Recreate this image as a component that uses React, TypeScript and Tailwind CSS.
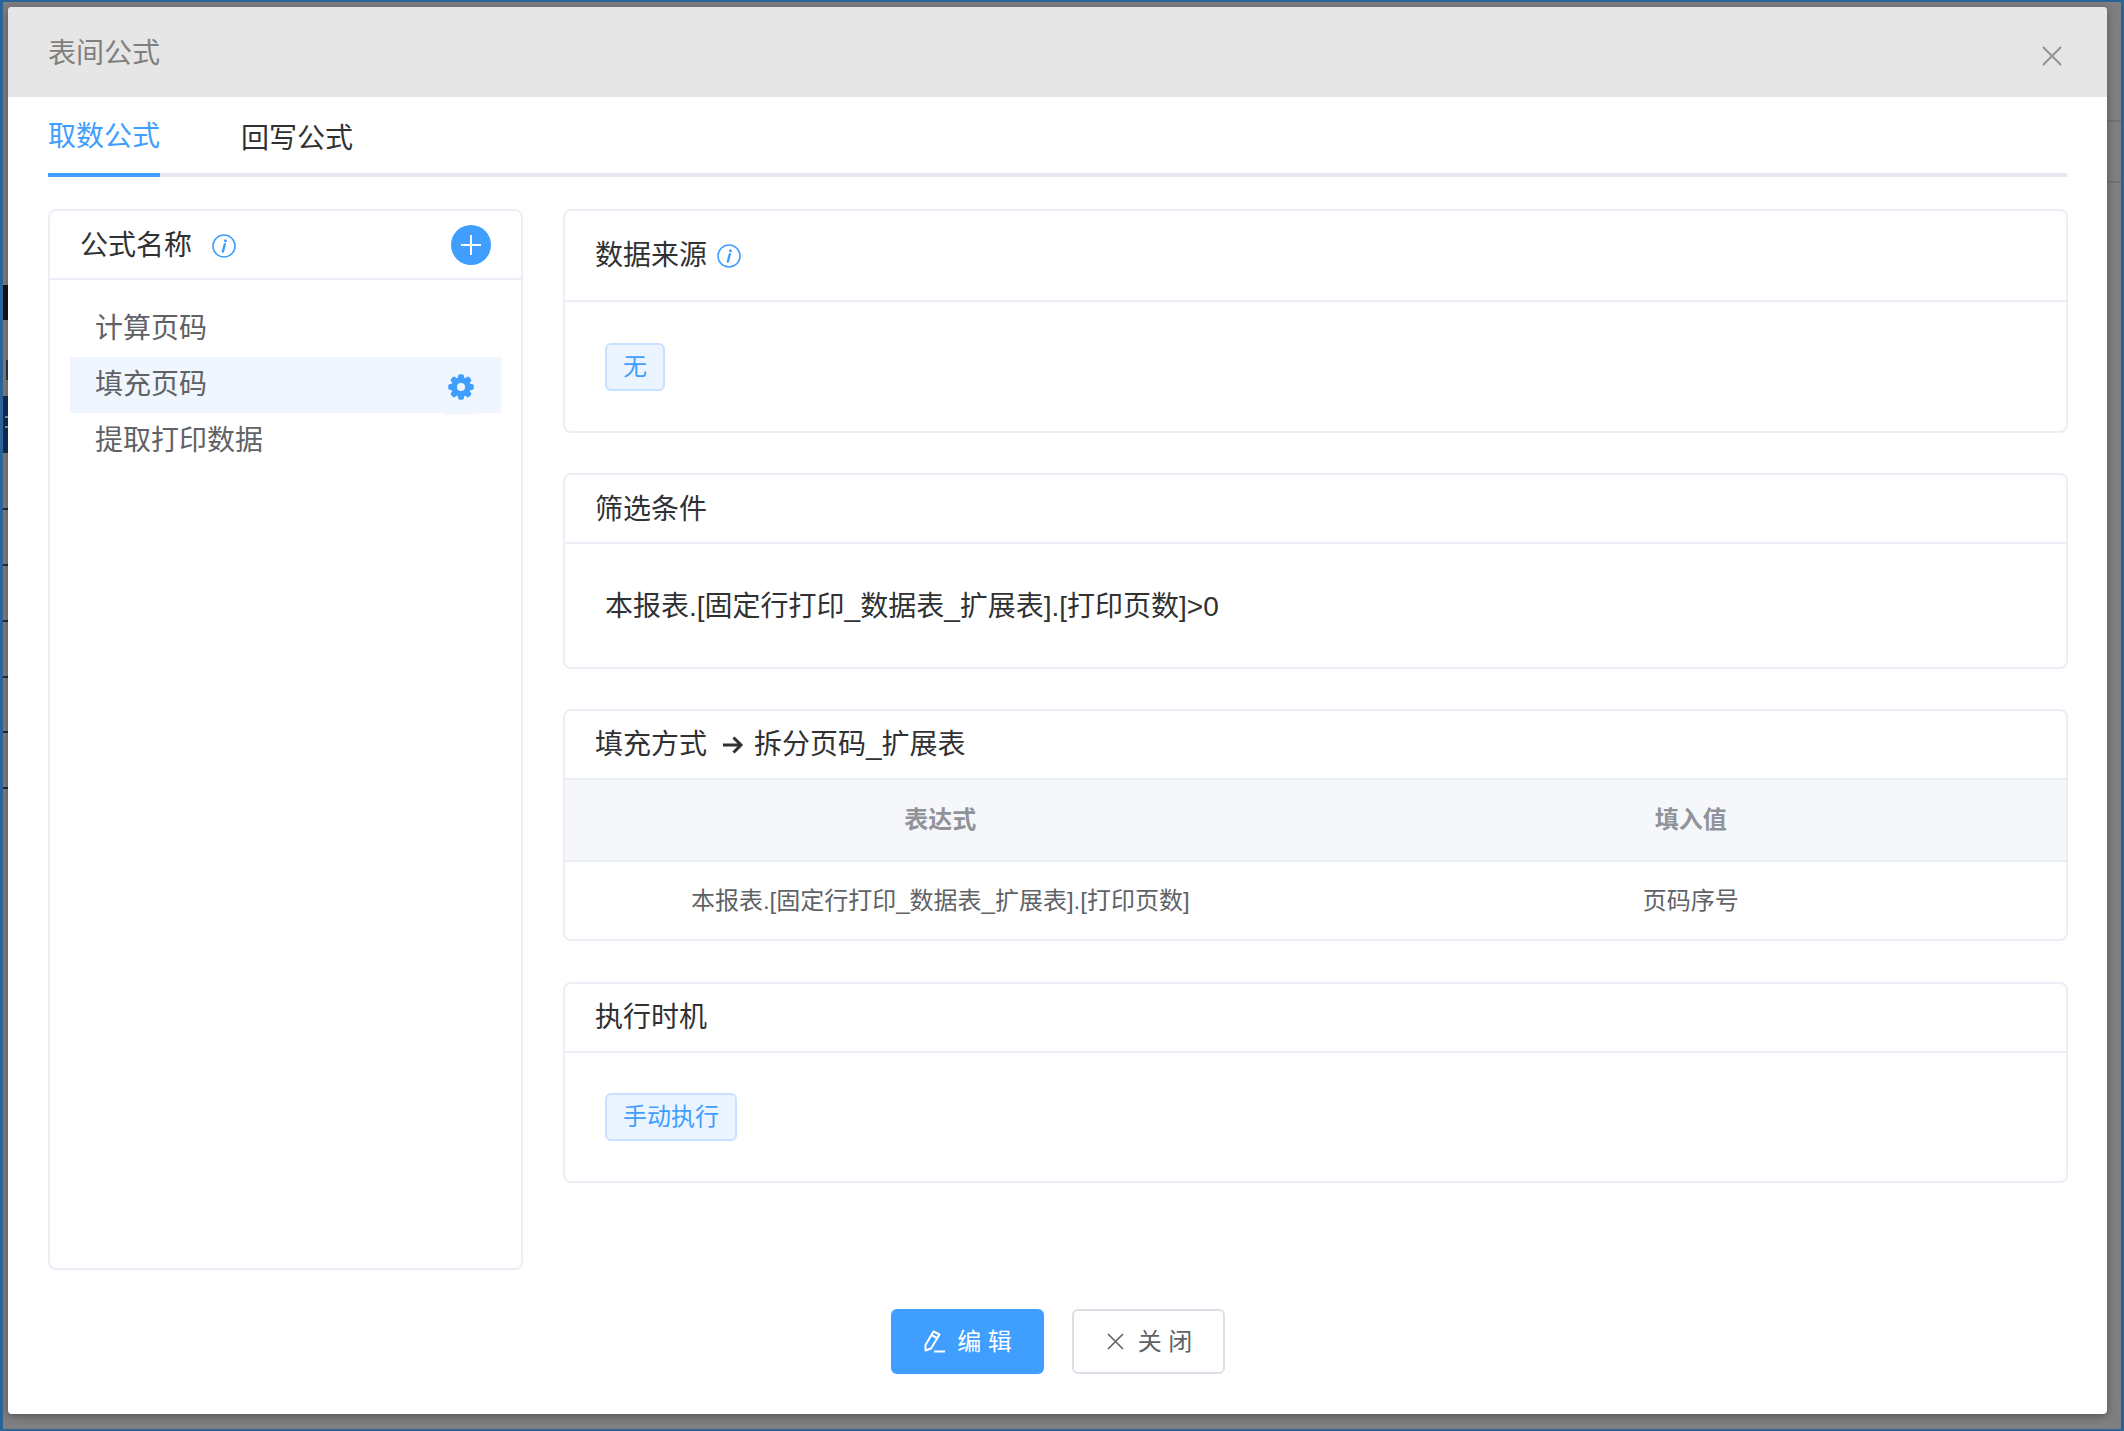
import React from 'react';

const InfoIcon = () => (
    <svg width="24" height="24" viewBox="0 0 24 24" fill="none" className="shrink-0">
        <circle cx="12" cy="12" r="11" stroke="#409eff" strokeWidth="1.6" />
        <circle cx="13.4" cy="6.800" r="1.500" fill="#409eff" />
        <path d="M12.800 10.200 L10.900 17.500" stroke="#409eff" strokeWidth="2.400" strokeLinecap="round" />
    </svg>
);

const GearIcon = () => (
    <svg width="26" height="26" viewBox="0 0 26 26" className="block">
        <circle cx="13" cy="13" r="10" fill="#409eff" />
        {[0, 45, 90, 135, 180, 225, 270, 315].map((a) => (
            <rect key={a} x="10" y="0.200" width="6" height="6" rx="2" fill="#409eff" transform={`rotate(${a} 13 13)`} />
        ))}
        <circle cx="13" cy="13" r="4" fill="#f0f6fe" />
    </svg>
);

const Tag = ({ children }: { children: React.ReactNode }) => (
    <span className="inline-flex h-[48px] items-center rounded-[6px] border-2 border-[#c6e2ff] bg-[#ecf5ff] px-[16px] text-[24px] text-[#409eff]">
        {children}
    </span>
);

const Panel = ({ title, className, children }: { title: React.ReactNode; className: string; children: React.ReactNode }) => (
    <section className={`flex flex-col rounded-[8px] border-2 border-[#ebeef5] ${className}`}>
        {title}
        {children}
    </section>
);

const PanelHead = ({ className, children }: { className: string; children: React.ReactNode }) => (
    <div className={`flex shrink-0 items-center border-b-2 border-[#ebeef5] pl-[30px] text-[28px] text-[#303133] ${className}`}>
        {children}
    </div>
);

// bits of the page behind the mask that stick out at the edges
const BehindLeft = () => (
    <div className="absolute left-0 top-0 h-full w-[5px]">
        <div className="absolute top-[283px] h-[35px] w-full bg-[#14141a]" />
        <div className="absolute left-[3px] top-[358px] h-[20px] w-[2px] bg-[#33384a]" />
        <div className="absolute top-[394px] h-[57px] w-full bg-[#0c2f5c]">
            <div className="absolute left-[2px] top-[20px] h-[2px] w-[3px] bg-[#8a9ab0]" />
            <div className="absolute left-[2px] top-[30px] h-[2px] w-[3px] bg-[#8a9ab0]" />
        </div>
        <div className="absolute top-[506px] h-[2px] w-full bg-[#23283a]" />
        <div className="absolute top-[562px] h-[2px] w-full bg-[#23283a]" />
        <div className="absolute top-[618px] h-[2px] w-full bg-[#23283a]" />
        <div className="absolute top-[674px] h-[2px] w-full bg-[#23283a]" />
        <div className="absolute top-[729px] h-[2px] w-full bg-[#23283a]" />
        <div className="absolute top-[785px] h-[2px] w-full bg-[#23283a]" />
    </div>
);

const BehindRight = () => (
    <div className="absolute right-0 top-0 h-full w-[14px]">
        <div className="absolute top-[118px] h-[2px] w-full bg-[#727272]" />
        <div className="absolute top-[179px] h-[2px] w-full bg-[#727272]" />
    </div>
);

export default function App() {
    return (
        <div className="relative h-[1431px] w-[2124px] overflow-hidden border-x-[3px] border-y-[2px] border-[#2b6297] bg-[#7f7f7f] pl-[5px] pt-[5px] font-['Liberation_Sans','Noto_Sans_CJK_SC',sans-serif]">
            <BehindLeft />
            <BehindRight />

            <div className="relative flex h-[1407px] w-[2099px] flex-col overflow-hidden rounded-[4px] bg-white shadow-[0_2px_8px_rgba(0,0,0,0.35)]">
                <header className="flex h-[90px] shrink-0 items-center justify-between bg-[#e6e6e6] pl-[40px] pr-[45px]">
                    <h1 className="pt-[3px] text-[28px] font-normal text-[#7f7f7f]">表间公式</h1>
                    <svg width="20" height="20" viewBox="0 0 20 20" className="mt-[7px]">
                        <path d="M1 1 L19 19 M19 1 L1 19" stroke="#909399" strokeWidth="2" />
                    </svg>
                </header>

                <div className="flex flex-1 flex-col px-[40px]">
                    <nav className="flex h-[80px] shrink-0 items-end gap-[81px] border-b-4 border-[#e4e7ed]">
                        <div className="-mb-[4px] flex h-[80px] w-[112px] items-center justify-center border-b-4 border-[#409eff] pt-[3px] text-[28px] text-[#409eff]">
                            取数公式
                        </div>
                        <div className="-mb-[4px] flex h-[80px] items-center pt-[3px] text-[28px] text-[#303133]">回写公式</div>
                    </nav>

                    <div className="mt-[32px] flex gap-[40px]">
                        <aside className="h-[1061px] w-[475px] shrink-0 rounded-[8px] border-2 border-[#ebeef5]">
                            <div className="flex h-[69px] items-center justify-between border-b-2 border-[#ebeef5] pl-[30px] pr-[30px]">
                                <div className="flex items-center gap-[20px] pt-[2px] text-[28px] text-[#303133]">
                                    公式名称
                                    <InfoIcon />
                                </div>
                                <button className="flex h-[40px] w-[40px] items-center justify-center rounded-full bg-[#409eff]">
                                    <svg width="20" height="20" viewBox="0 0 20 20">
                                        <path d="M10 0 V20 M0 10 H20" stroke="#fff" strokeWidth="2" />
                                    </svg>
                                </button>
                            </div>
                            <ul className="px-[20px] pt-[21px] text-[28px] text-[#606266]">
                                <li className="flex h-[56px] items-center pl-[25px]">计算页码</li>
                                <li className="relative flex h-[56px] items-center justify-between bg-[#f0f6fe] pl-[25px] pr-[27px]">
                                    填充页码
                                    <span className="mt-[3px]">
                                        <GearIcon />
                                    </span>
                                    <span className="absolute bottom-[-2px] right-[22px] h-[2px] w-[36px] rounded-b-full bg-[#f5f9ff]" />
                                </li>
                                <li className="flex h-[56px] items-center pl-[25px]">提取打印数据</li>
                            </ul>
                        </aside>

                        <div className="flex w-[1505px] shrink-0 flex-col">
                            <Panel
                                className="h-[224px]"
                                title={
                                    <PanelHead className="h-[91px] gap-[10px]">
                                        数据来源
                                        <InfoIcon />
                                    </PanelHead>
                                }
                            >
                                <div className="pl-[40px] pt-[41px]">
                                    <Tag>无</Tag>
                                </div>
                            </Panel>

                            <Panel className="mt-[40px] h-[196px]" title={<PanelHead className="h-[69px] pt-[2px]">筛选条件</PanelHead>}>
                                <div className="flex flex-1 items-center pl-[40px] pt-[2px] text-[28px] text-[#303133]">
                                    本报表.[固定行打印_数据表_扩展表].[打印页数]&gt;0
                                </div>
                            </Panel>

                            <Panel
                                className="mt-[40px] h-[232px]"
                                title={
                                    <PanelHead className="h-[69px] pt-[1px]">
                                        填充方式
                                        <svg width="22" height="20" viewBox="0 0 22 20" className="ml-[15px] mr-[10px]">
                                            <path d="M1 10 H19 M11.500 2.500 L19 10 L11.500 17.500" fill="none" stroke="#303133" strokeWidth="3" />
                                        </svg>
                                        拆分页码_扩展表
                                    </PanelHead>
                                }
                            >
                                <table className="w-full table-fixed text-center text-[24px]">
                                    <thead>
                                        <tr className="h-[81px] border-b-2 border-[#ebeef5] bg-[#f5f7fa] text-[#909399]">
                                            <th className="font-semibold">表达式</th>
                                            <th className="font-semibold">填入值</th>
                                        </tr>
                                    </thead>
                                    <tbody>
                                        <tr className="h-[78px] text-[#606266]">
                                            <td>本报表.[固定行打印_数据表_扩展表].[打印页数]</td>
                                            <td>页码序号</td>
                                        </tr>
                                    </tbody>
                                </table>
                            </Panel>

                            <Panel className="mt-[41px] h-[201px]" title={<PanelHead className="h-[69px]">执行时机</PanelHead>}>
                                <div className="pl-[40px] pt-[40px]">
                                    <Tag>手动执行</Tag>
                                </div>
                            </Panel>
                        </div>
                    </div>

                    <div className="mt-[39px] flex justify-center gap-[28px] text-[24px]">
                        <button className="flex h-[65px] w-[153px] items-center justify-center gap-[12px] rounded-[6px] bg-[#409eff] pl-[2px] text-white">
                            <svg width="21" height="23" viewBox="0 0 21 23" fill="none" stroke="#fff" strokeWidth="2">
                                <path d="M1.500 20.500 L1.500 15 L9.500 1.500 L15.500 4.500 L7 18.500 Z" strokeLinejoin="round" />
                                <path d="M7.500 5 L13 8" />
                                <path d="M10 21.500 H21" />
                            </svg>
                            <span>编 辑</span>
                        </button>
                        <button className="flex h-[65px] w-[153px] items-center justify-center gap-[14px] rounded-[6px] border-2 border-[#dcdfe6] bg-white pl-[3px] text-[#606266]">
                            <svg width="17" height="17" viewBox="0 0 17 17">
                                <path d="M1 1 L16 16 M16 1 L1 16" stroke="#606266" strokeWidth="1.600" />
                            </svg>
                            <span>关 闭</span>
                        </button>
                    </div>
                </div>
            </div>
        </div>
    );
}
